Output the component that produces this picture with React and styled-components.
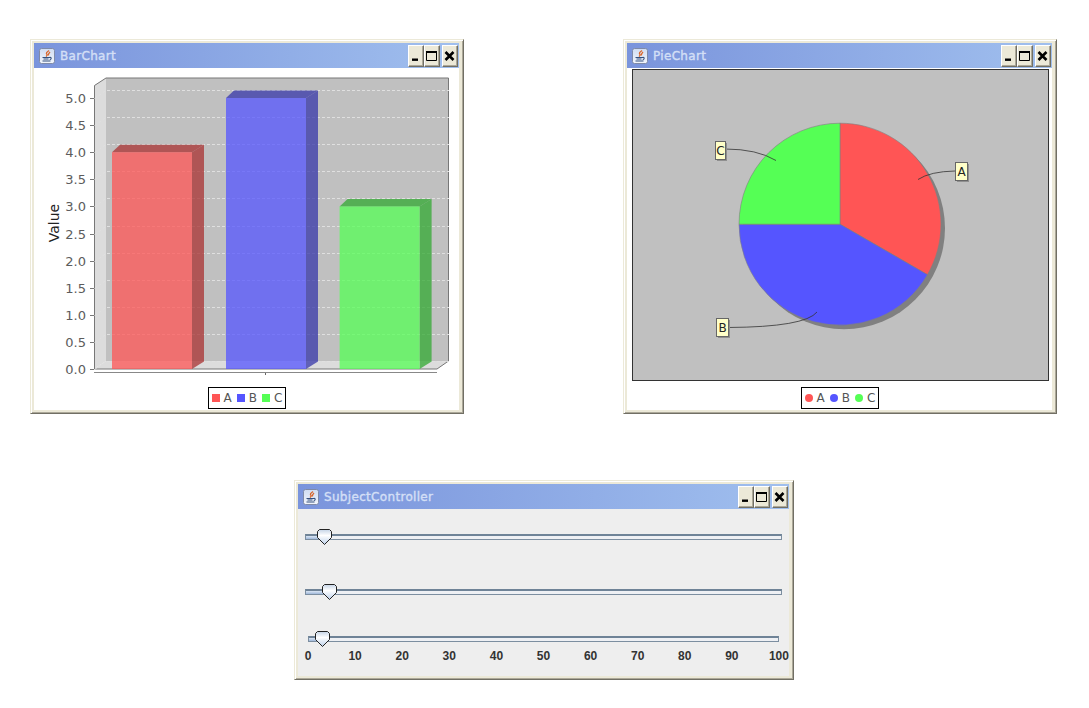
import React from "react";
import styled, { createGlobalStyle } from "styled-components";

const Global = createGlobalStyle`
  html, body { margin: 0; padding: 0; background: #fff; }
  body { width: 1089px; height: 708px; overflow: hidden; position: relative; font-family: "DejaVu Sans", sans-serif; }
`;

const Frame = styled.section`
  position: absolute;
  left: ${(p) => p.$x}px;
  top: ${(p) => p.$y}px;
  width: ${(p) => p.$w}px;
  height: ${(p) => p.$h}px;
  box-sizing: border-box;
  display: flex;
  flex-direction: column;
  background: #ece9d8;
  border: 1px solid;
  border-color: #ece9d8 #716f64 #716f64 #ece9d8;
  padding: 3px 4px 3px 3px;
  box-shadow: inset 1px 1px 0 #fff, inset -1px -1px 0 #aca899;
`;

const TitleBar = styled.header`
  flex: 0 0 25px;
  display: flex;
  align-items: center;
  background: linear-gradient(90deg, #7a94dc, #a0bfee);
  padding: 0 1px 0 5px;
`;

const TitleText = styled.span`
  font: normal 12px "DejaVu Sans", sans-serif;
  -webkit-text-stroke: 0.4px #d3dff6;
  letter-spacing: 0.32px;
  color: #d3dff6;
  margin-left: 5px;
  flex: 1;
  white-space: nowrap;
`;

const CtrlButton = styled.button`
  width: 16px;
  height: 22px;
  box-sizing: border-box;
  padding: 0;
  margin: 0 0 0 ${(p) => p.$gap || 0}px;
  display: flex;
  align-items: center;
  justify-content: center;
  background: #ece9d8;
  border: 1px solid;
  border-color: #fff #716f64 #716f64 #fff;
  box-shadow: inset -1px -1px 0 #aca899;
`;

const Body = styled.main`
  flex: 1;
  min-height: 0;
  display: flex;
  flex-direction: column;
  background: ${(p) => p.$bg || "#fff"};
`;

const ChartSvg = styled.svg`
  display: block;
  flex: none;
  font-family: "DejaVu Sans", sans-serif;
`;

const PieSvg = styled(ChartSvg)`
  box-sizing: border-box;
  margin: 1px 0 0 5px;
  border: 1px solid #333;
  background: #c0c0c0;
`;

const LegendBox = styled.div`
  flex: none;
  align-self: center;
  margin-top: ${(p) => p.$gap}px;
  box-sizing: border-box;
  width: 78px;
  height: 22px;
  border: 1px solid #000;
  padding-left: 3px;
  display: flex;
  align-items: center;
  background: #fff;
`;

const LegendItem = styled.div`
  flex: 0 0 25.3px;
  display: flex;
  align-items: center;
  gap: 4px;
  font-size: 12px;
  color: #555;
  line-height: 1;
`;

const Swatch = styled.i`
  display: block;
  width: 8px;
  height: 8px;
  background: ${(p) => p.$color};
  border-radius: ${(p) => (p.$round ? "50%" : "0")};
`;

const ControlBody = styled(Body)`
  padding: 25px 7px 0 7px;
  background: #eeeeee;
`;

const Track = styled.div`
  position: relative;
  box-sizing: border-box;
  height: 6px;
  margin: ${(p) => p.$top}px ${(p) => p.$inset}px 0;
  background: #eef0f4;
  border: 1px solid #7c8ea0;
  border-top: 2px solid #6f8397;
`;

const Fill = styled.div`
  height: 100%;
  background: linear-gradient(180deg, #dbe6f4, #a0b8da);
`;

const Thumb = styled.svg`
  position: absolute;
  top: -7px;
  display: block;
`;

const Scale = styled.div`
  display: flex;
  justify-content: space-between;
  margin: 7px 3px 0;
`;

const Tick = styled.span`
  width: 0;
  display: flex;
  justify-content: center;
  font: bold 12px "Liberation Sans", Arial, sans-serif;
  color: #333;
  line-height: 14px;
`;

const JavaIcon = () => (
  <svg width="16" height="16" viewBox="0 0 16 16">
    <defs>
      <linearGradient id="jbg" x1="0" y1="0" x2="0" y2="1">
        <stop offset="0" stopColor="#cfdcf2" />
        <stop offset="1" stopColor="#f2f5fb" />
      </linearGradient>
    </defs>
    <rect x="0.5" y="0.5" width="15" height="15" rx="2" fill="url(#jbg)" stroke="#7f8aa8" />
    <path d="M10 2.5C8 4 6.5 5 8 6.5C8.5 7.5 7.5 8 7 8.5M11 4C10 5 9 6 9.5 7.5" fill="none" stroke="#d9662b" strokeWidth="1.3" />
    <path d="M3.5 9.5H10.5M4.5 11H9.5M3.5 13H11.5M10.5 9.5c2-.5 2.5 1.5 .3 2.2" fill="none" stroke="#34507f" strokeWidth="1.1" />
  </svg>
);

const MinGlyph = () => (
  <svg width="14" height="20" viewBox="0 0 14 20"><rect x="3" y="12.5" width="6" height="2.4" fill="#000" /></svg>
);
const MaxGlyph = () => (
  <svg width="14" height="20" viewBox="0 0 14 20"><path d="M1.5 5.5h10v9h-10z" fill="none" stroke="#000" /><rect x="1" y="5" width="11" height="2" fill="#000" /></svg>
);
const CloseGlyph = () => (
  <svg width="14" height="20" viewBox="0 0 14 20"><path d="M2.5 6l8 8M10.5 6l-8 8" stroke="#000" strokeWidth="2.6" /></svg>
);

const Window = ({ title, x, y, w, h, children }) => (
  <Frame $x={x} $y={y} $w={w} $h={h}>
    <TitleBar>
      <JavaIcon />
      <TitleText>{title}</TitleText>
      <CtrlButton aria-label="minimize"><MinGlyph /></CtrlButton>
      <CtrlButton aria-label="maximize"><MaxGlyph /></CtrlButton>
      <CtrlButton aria-label="close" $gap={2}><CloseGlyph /></CtrlButton>
    </TitleBar>
    {children}
  </Frame>
);

const SERIES = [
  { name: "A", color: "#ff5555" },
  { name: "B", color: "#5555ff" },
  { name: "C", color: "#55ff55" },
];

const Legend = ({ round, gap }) => (
  <LegendBox $gap={gap}>
    {SERIES.map((s) => (
      <LegendItem key={s.name}>
        <Swatch $color={s.color} $round={round} />
        {s.name}
      </LegendItem>
    ))}
  </LegendBox>
);

const yOf = (v) => 369 - v * 54.2;
const TICKS = [0, 0.5, 1, 1.5, 2, 2.5, 3, 3.5, 4, 4.5, 5];
const BARS = [
  { x: 112, v: 4, front: "rgba(255,85,85,.75)", dark: "rgba(170,50,50,.75)" },
  { x: 226, v: 5, front: "rgba(85,85,255,.75)", dark: "rgba(55,55,170,.75)" },
  { x: 339.6, v: 3, front: "rgba(85,255,85,.75)", dark: "rgba(50,170,50,.75)" },
];

const BarChart = () => (
  <ChartSvg width="425" height="319" viewBox="34 68 425 319">
    <polygon points="106,78 449,78 449,361 106,361" fill="#c0c0c0" />
    <polygon points="94,85.5 106,78 106,361 94,369" fill="#dcdcdc" />
    <polygon points="94,369 106,361 449,361 437,369" fill="#dcdcdc" />
    <path d="M94.5 85.5L106 78H448.5V361L437 369H94.5Z" fill="none" stroke="#777" />
    {TICKS.map((t) => {
      const y = Math.round(yOf(t));
      return (
        <g key={t}>
          <path d={`M94.5 ${y + 0.5}L106 ${y - 7.5}H449`} fill="none" stroke="#e0e0e0" strokeDasharray="3 2" />
          <line x1="90" x2="94" y1={y + 0.5} y2={y + 0.5} stroke="#777" />
          <text x="86" y={y + 5} textAnchor="end" fontSize="13" fill="#5c5c5c">{t.toFixed(1)}</text>
        </g>
      );
    })}
    {BARS.map((b) => {
      const top = yOf(b.v);
      const r = b.x + 80;
      return (
        <g key={b.x}>
          <polygon points={`${b.x},${top} ${b.x + 8},${top - 7.5} ${r + 12},${top - 7.5} ${r},${top}`} fill={b.dark} />
          <polygon points={`${r},${top} ${r + 12},${top - 7.5} ${r + 12},361.5 ${r},369`} fill={b.dark} />
          <rect x={b.x} y={top} width="80" height={369 - top} fill={b.front} />
        </g>
      );
    })}
    <line x1="94" x2="437" y1="372.5" y2="372.5" stroke="#888" />
    <line x1="265.5" x2="265.5" y1="373" y2="375" stroke="#666" />
    <text transform="translate(59 223) rotate(-90)" textAnchor="middle" fontSize="14" fill="#222">Value</text>
  </ChartSvg>
);

const polar = (deg, r = 101, cx = 840, cy = 224.2) => {
  const a = (deg * Math.PI) / 180;
  return [cx + r * Math.sin(a), cy - r * Math.cos(a)];
};
const slice = (from, to, color) => {
  const [x1, y1] = polar(from);
  const [x2, y2] = polar(to);
  const large = to - from > 180 ? 1 : 0;
  return (
    <path
      key={color}
      d={`M840 224.2L${x1} ${y1}A101 101 0 ${large} 1 ${x2} ${y2}Z`}
      fill={color}
      stroke="#808080"
      strokeWidth="0.6"
    />
  );
};

const PieLabel = ({ x, y, w, text }) => (
  <g>
    <rect x={x + 2} y={y + 2} width={w} height="18" fill="#8f8f8f" />
    <rect x={x + 0.5} y={y + 0.5} width={w} height="18" fill="#ffffc8" stroke="#666" />
    <text x={x + 0.5 + w / 2} y={y + 14} textAnchor="middle" fontSize="12" fill="#222">{text}</text>
  </g>
);

const PieChart = () => (
  <PieSvg width="417" height="312" viewBox="633 70 415 310">
    <circle cx="844" cy="228.2" r="101" fill="#808080" />
    {slice(0, 120, "#ff5555")}
    {slice(120, 270, "#5555ff")}
    {slice(270, 360, "#55ff55")}
    <path d="M918 179.5Q930 171.5 955 171M776 160.5Q757 149 725 149M817 312Q805 327 728 327.5" fill="none" stroke="#333" strokeWidth="0.8" />
    <PieLabel x={955} y={162} w={12} text="A" />
    <PieLabel x={715} y={141} w={10} text="C" />
    <PieLabel x={716} y={318} w={12} text="B" />
  </PieSvg>
);

const ThumbShape = ({ left, id }) => (
  <Thumb width="16" height="17" viewBox="0 0 16 17" style={{ left }}>
    <defs>
      <linearGradient id={id} x1="0" y1="0" x2="0" y2="1">
        <stop offset="0" stopColor="#c4d3e6" />
        <stop offset="0.4" stopColor="#ffffff" />
        <stop offset="1" stopColor="#bcd0ea" />
      </linearGradient>
    </defs>
    <path d="M2.5 .5H12.5L14.5 2.5V8.5L7.5 15.5L.5 8.5V2.5Z" fill={`url(#${id})`} stroke="#222" />
  </Thumb>
);

const Slider = ({ top, inset, pos, id }) => (
  <Track $top={top} $inset={inset}>
    <Fill style={{ width: pos + 4 }} />
    <ThumbShape left={pos} id={id} />
  </Track>
);

const Controller = () => (
  <ControlBody>
    <Slider top={0} inset={0} pos={11} id="t1" />
    <Slider top={49} inset={0} pos={16} id="t2" />
    <Slider top={41} inset={3} pos={6} id="t3" />
    <Scale>
      {[0, 10, 20, 30, 40, 50, 60, 70, 80, 90, 100].map((n) => (
        <Tick key={n}>{n}</Tick>
      ))}
    </Scale>
  </ControlBody>
);

export default function App() {
  return (
    <>
      <Global />
      <Window title="BarChart" x={30} y={39} w={434} h={375}>
        <Body>
          <BarChart />
          <Legend gap={0} />
        </Body>
      </Window>
      <Window title="PieChart" x={623} y={39} w={434} h={375}>
        <Body>
          <PieChart />
          <Legend round gap={6} />
        </Body>
      </Window>
      <Window title="SubjectController" x={294} y={480} w={500} h={200}>
        <Controller />
      </Window>
    </>
  );
}
